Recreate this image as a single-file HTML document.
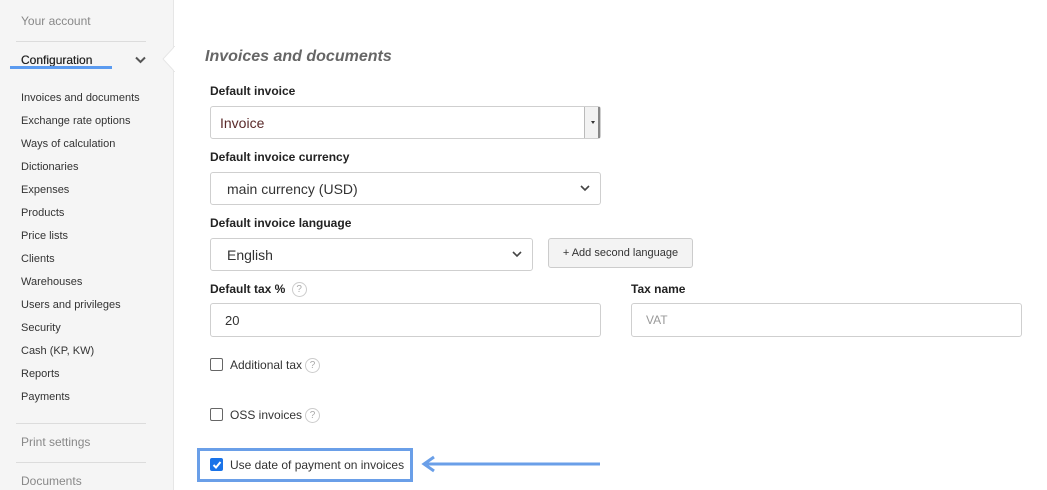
<!DOCTYPE html>
<html><head><style>
*{box-sizing:border-box;margin:0;padding:0}
body{width:1047px;height:490px;overflow:hidden;background:#fff;font-family:"Liberation Sans",Arial,sans-serif;position:relative;color:#333}
.sb{position:absolute;left:0;top:0;width:174px;height:490px;background:#f5f5f5;border-right:1px solid #e6e6e6}
.a{position:absolute;font-size:12px}
.s{position:absolute;left:21px;font-size:11px;color:#333}
.hr{position:absolute;left:16px;width:130px;height:1px;background:#dcdcdc}
.lb{position:absolute;font-size:12px;font-weight:bold;color:#222}
.in{position:absolute;border:1px solid #cfcfcf;border-radius:3px;background:#fff;font-size:14px;color:#333;padding-left:16px;display:flex;align-items:center}
.chev{position:absolute;right:10px;top:50%;margin-top:-4px}
.cb{position:absolute;width:13px;height:13px;border:1px solid #666;border-radius:2px;background:#fff}
.q{display:inline-block;width:15px;height:15px;border:1px solid #ccc;border-radius:50%;font-size:10px;color:#aaa;text-align:center;line-height:13px;vertical-align:middle;margin-left:3px}
</style></head><body>
<div class="sb">
<div class="a" style="left:21px;top:14px;color:#888">Your account</div>
<div class="hr" style="top:41px"></div>
<div class="a" style="left:21px;top:53px;color:#222;text-shadow:0 0 0.4px #222">Configuration</div>
<div style="position:absolute;left:10px;top:66px;width:102px;height:3px;background:#5b9bf0"></div>
<svg style="position:absolute;left:135px;top:56px" width="11" height="8"><path d="M1 1.5L5.5 6 10 1.5" stroke="#555" stroke-width="2" fill="none"/></svg>
<div class="s" style="top:92px">Invoices and documents</div>
<div class="s" style="top:115px">Exchange rate options</div>
<div class="s" style="top:138px">Ways of calculation</div>
<div class="s" style="top:161px">Dictionaries</div>
<div class="s" style="top:184px">Expenses</div>
<div class="s" style="top:207px">Products</div>
<div class="s" style="top:230px">Price lists</div>
<div class="s" style="top:253px">Clients</div>
<div class="s" style="top:276px">Warehouses</div>
<div class="s" style="top:299px">Users and privileges</div>
<div class="s" style="top:322px">Security</div>
<div class="s" style="top:345px">Cash (KP, KW)</div>
<div class="s" style="top:368px">Reports</div>
<div class="s" style="top:391px">Payments</div>
<div class="hr" style="top:423px"></div>
<div class="a" style="left:21px;top:435px;color:#888">Print settings</div>
<div class="hr" style="top:462px"></div>
<div class="a" style="left:21px;top:474px;color:#888">Documents</div>
</div>
<svg style="position:absolute;left:162px;top:46px" width="13" height="26"><path d="M13 0L1 13 13 26Z" fill="#fff" stroke="#e6e6e6"/><path d="M13 1V25" stroke="#fff" stroke-width="2"/></svg>
<div style="position:absolute;left:205px;top:48px;font-size:16px;font-weight:bold;font-style:italic;color:#666">Invoices and documents</div>
<div class="lb" style="left:210px;top:84px">Default invoice</div>
<div class="in" style="left:210px;top:106px;width:391px;height:33px;padding-left:9px;color:#5a2a2a">Invoice
<div style="position:absolute;right:0;top:0;width:16px;height:31px;border-left:1px solid #bbb;background:#f2f2f2;border-right:2px solid #888"><div style="position:absolute;left:6px;top:14px;border:2px solid transparent;border-top:3px solid #333"></div></div></div>
<div class="lb" style="left:210px;top:150px">Default invoice currency</div>
<div class="in" style="left:210px;top:172px;width:391px;height:33px">main currency (USD)<svg class="chev" width="10" height="7"><path d="M1 1L5 5 9 1" stroke="#444" stroke-width="1.6" fill="none"/></svg></div>
<div class="lb" style="left:210px;top:216px">Default invoice language</div>
<div class="in" style="left:210px;top:238px;width:323px;height:33px">English<svg class="chev" width="10" height="7"><path d="M1 1L5 5 9 1" stroke="#444" stroke-width="1.6" fill="none"/></svg></div>
<div style="position:absolute;left:548px;top:238px;width:145px;height:30px;border:1px solid #ccc;border-radius:3px;background:#f3f3f3;font-size:11px;color:#333;text-align:center;line-height:29px">+ Add second language</div>
<div class="lb" style="left:210px;top:282px">Default tax % <span class="q" style="font-weight:normal">?</span></div>
<div class="in" style="left:210px;top:303px;width:391px;height:34px;padding-left:14px;font-size:13px">20</div>
<div class="lb" style="left:631px;top:282px">Tax name</div>
<div class="in" style="left:631px;top:303px;width:391px;height:34px;padding-left:14px;font-size:12px;color:#999">VAT</div>
<div class="cb" style="left:210px;top:358px"></div>
<div class="a" style="left:230px;top:358px">Additional tax<span class="q">?</span></div>
<div class="cb" style="left:210px;top:408px"></div>
<div class="a" style="left:230px;top:408px">OSS invoices<span class="q">?</span></div>
<div style="position:absolute;left:197px;top:448px;width:216px;height:34px;border:3px solid #6a9fe8"></div>
<div class="cb" style="left:210px;top:458px;background:#1a73e8;border-color:#1a73e8"><svg style="position:absolute;left:1px;top:1px" width="10" height="10"><path d="M1.5 5L4 7.5 8.5 2" stroke="#fff" stroke-width="2" fill="none"/></svg></div>
<div class="a" style="left:230px;top:458px">Use date of payment on invoices</div>
<svg style="position:absolute;left:420px;top:455px" width="182" height="18"><path d="M4 9H180" stroke="#6a9fe8" stroke-width="3"/><path d="M14 2L4 9 14 16" stroke="#6a9fe8" stroke-width="3" fill="none"/></svg>
</body></html>
